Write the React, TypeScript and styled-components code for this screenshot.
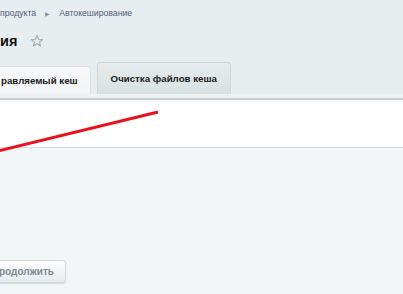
import React from "react";
import styled, { createGlobalStyle } from "styled-components";

const Global = createGlobalStyle`
  html, body { margin: 0; padding: 0; }
  body { font-family: "Liberation Sans", Arial, sans-serif; background: #f3f6f7; overflow: hidden; }
`;

const Viewport = styled.div`
  position: relative;
  width: 403px;
  height: 294px;
  overflow: hidden;
  background: #f3f6f7;
`;

const Shell = styled.div`
  margin-left: -12px;
  width: 430px;
  display: flex;
  flex-direction: column;
`;

const Header = styled.div`
  background: #e8eef0;
  display: flex;
  flex-direction: column;
`;

const Breadcrumbs = styled.div`
  height: 26px;
  padding-left: 12px;
  display: flex;
  align-items: center;
  gap: 9px;
  font-size: 8.7px;
  color: #4d6080;
`;

const Crumb = styled.span`
  white-space: nowrap;
`;

const Sep = styled.span`
  font-size: 6px;
  color: #8b969c;
`;

const TitleRow = styled.div`
  height: 30px;
  padding-left: 12px;
  display: flex;
  align-items: center;
  gap: 13px;
`;

const Title = styled.h1`
  margin: 0;
  font-size: 14.5px;
  font-weight: bold;
  color: #111;
  line-height: 30px;
`;

const Tabs = styled.div`
  height: 38px;
  display: flex;
  align-items: flex-end;
  gap: 6px;
`;

const Tab = styled.div<{ $active?: boolean }>`
  height: ${(p) => (p.$active ? 28 : 32)}px;
  box-sizing: border-box;
  padding: 0 ${(p) => (p.$active ? 12 : 13)}px;
  display: flex;
  align-items: center;
  font-size: 9.7px;
  font-weight: bold;
  color: #222;
  border: 1px solid ${(p) => (p.$active ? "#dbe2e4" : "#cfd8db")};
  border-bottom: none;
  border-radius: 3px 3px 0 0;
  background: ${(p) =>
    p.$active
      ? "linear-gradient(#f8fafa, #f1f4f5)"
      : "linear-gradient(#e6ecee, #d9e1e3)"};
  white-space: nowrap;
`;

const Strip = styled.div`
  height: 4px;
  background: #eef2f3;
  border-bottom: 2px solid #c6ced1;
`;

const Panel = styled.div`
  height: 47px;
  background: #fff;
  border-bottom: 1px solid #d6dde0;
`;

const Footer = styled.div`
  padding-top: 112px;
  display: flex;
`;

const Button = styled.button`
  height: 23px;
  padding: 0 11px 0 10px;
  font-family: inherit;
  font-size: 10px;
  font-weight: bold;
  color: #7f8b91;
  border: 1px solid #d3dadd;
  border-radius: 3px;
  background: linear-gradient(#fdfefe, #e6ebed);
  box-shadow: 0 1px 1px rgba(0, 0, 0, 0.12);
`;

const Annotation = styled.svg`
  position: absolute;
  left: 0;
  top: 0;
  pointer-events: none;
`;

const StarIcon = () => (
  <svg width="14" height="14" viewBox="0 0 24 24" aria-hidden>
    <polygon
      points="12,2.5 14.8,9 21.5,9.4 16.3,13.8 18,20.5 12,16.8 6,20.5 7.7,13.8 2.5,9.4 9.2,9"
      fill="none"
      stroke="#a2aaae"
      strokeWidth="1.8"
      strokeLinejoin="round"
    />
  </svg>
);

export default function App() {
  return (
    <>
      <Global />
      <Viewport>
        <Shell>
          <Header>
            <Breadcrumbs>
              <Crumb>продукта</Crumb>
              <Sep>▶</Sep>
              <Crumb>Автокеширование</Crumb>
            </Breadcrumbs>
            <TitleRow>
              <Title>ия</Title>
              <StarIcon />
            </TitleRow>
            <Tabs>
              <Tab $active>равляемый кеш</Tab>
              <Tab>Очистка файлов кеша</Tab>
            </Tabs>
          </Header>
          <Strip />
          <Panel />
          <Footer>
            <Button>родолжить</Button>
          </Footer>
        </Shell>
        <Annotation width="403" height="294">
          <line x1="-2" y1="151" x2="158" y2="112" stroke="#e8121c" strokeWidth="3" />
        </Annotation>
      </Viewport>
    </>
  );
}
